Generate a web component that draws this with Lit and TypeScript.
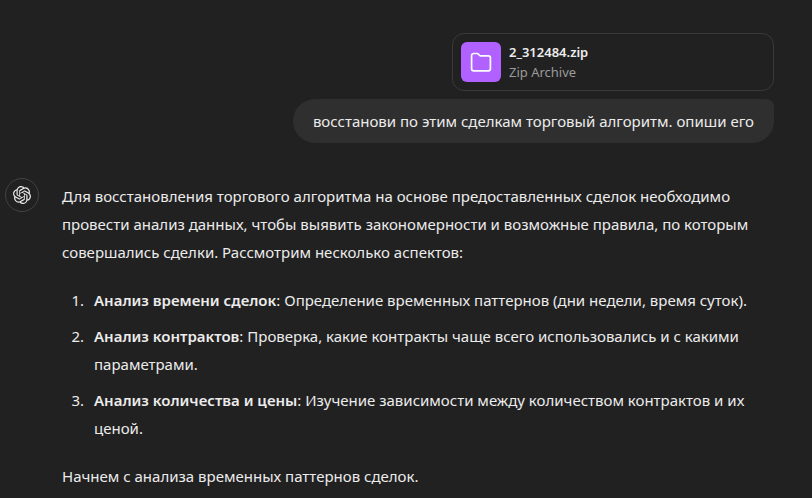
import { LitElement, html, css } from "lit";
import { customElement, property } from "lit/decorators.js";

interface Aspect {
  title: string;
  text: string;
}

const ASPECTS: Aspect[] = [
  { title: "Анализ времени сделок", text: "Определение временных паттернов (дни недели, время суток)." },
  { title: "Анализ контрактов", text: "Проверка, какие контракты чаще всего использовались и с какими параметрами." },
  { title: "Анализ количества и цены", text: "Изучение зависимости между количеством контрактов и их ценой." },
];

@customElement("file-card")
export class FileCard extends LitElement {
  @property() name = "";
  @property() kind = "";

  static styles = css`
    :host {
      display: block;
      box-sizing: border-box;
      width: 322px;
      max-width: 100%;
      padding: 8px;
      border: 1px solid #393939;
      border-radius: 12px;
    }
    .row {
      display: flex;
      align-items: center;
      gap: 8px;
    }
    .tile {
      display: flex;
      flex: none;
      align-items: center;
      justify-content: center;
      width: 40px;
      height: 40px;
      border-radius: 6px;
      background: #b061ff;
    }
    .name,
    .kind {
      font-size: 13px;
      line-height: 20px;
    }
    .name {
      font-weight: 600;
      color: #ececec;
    }
    .kind {
      color: #9b9b9b;
    }
  `;

  render() {
    return html`
      <div class="row">
        <div class="tile">
          <svg width="24" height="24" viewBox="0 0 24 24" fill="none" stroke="#fff" stroke-width="1.7" stroke-linejoin="round" aria-hidden="true">
            <path d="M2.6 5.5a2 2 0 0 1 2-2h3.5a2 2 0 0 1 1.500.7l.8 1a2 2 0 0 0 1.500.7h7.500a2 2 0 0 1 2 2v10.900a2 2 0 0 1-2 2H4.600a2 2 0 0 1-2-2z" />
          </svg>
        </div>
        <div>
          <div class="name">${this.name}</div>
          <div class="kind">${this.kind}</div>
        </div>
      </div>
    `;
  }
}

@customElement("app-root")
export class AppRoot extends LitElement {
  static styles = css`
    :host {
      display: block;
      box-sizing: border-box;
      min-height: 100vh;
      padding: 33px 38px 7px 5px;
      background: #212121;
      color: #ececec;
      font-family: "Segoe UI", "Noto Sans", sans-serif;
      font-size: 15px;
      line-height: 28px;
    }
    .user {
      display: flex;
      flex-direction: column;
      align-items: flex-end;
      gap: 8px;
    }
    .bubble {
      padding: 8px 20px;
      border-radius: 22px 8px 22px 22px;
      background: #2f2f2f;
    }
    .assistant {
      display: flex;
      align-items: flex-start;
      gap: 23px;
      margin-top: 35px;
    }
    .avatar {
      display: flex;
      flex: none;
      align-items: center;
      justify-content: center;
      box-sizing: border-box;
      width: 34px;
      height: 34px;
      border: 1px solid #424242;
      border-radius: 50%;
    }
    .answer {
      flex: 1;
      min-width: 0;
      padding-top: 4px;
    }
    p {
      margin: 0;
    }
    ol {
      display: flex;
      flex-direction: column;
      gap: 8px;
      margin: 20px 0;
      padding-left: 26px;
    }
    li {
      padding-left: 6px;
    }
    strong {
      font-weight: 600;
    }
  `;

  render() {
    return html`
      <section class="user">
        <file-card name="2_312484.zip" kind="Zip Archive"></file-card>
        <div class="bubble">восстанови по этим сделкам торговый алгоритм. опиши его</div>
      </section>
      <article class="assistant">
        <div class="avatar">
          <svg width="18" height="18" viewBox="0 0 24 24" fill="#ececec" aria-hidden="true">
            <path d="M22.2819 9.8211a5.9847 5.9847 0 0 0-.5157-4.9108 6.0462 6.0462 0 0 0-6.5098-2.9A6.0651 6.0651 0 0 0 4.9807 4.1818a5.9847 5.9847 0 0 0-3.9977 2.9 6.0462 6.0462 0 0 0 .7427 7.0966 5.98 5.98 0 0 0 .511 4.9107 6.051 6.051 0 0 0 6.5146 2.9001A5.9847 5.9847 0 0 0 13.2599 24a6.0557 6.0557 0 0 0 5.7718-4.2058 5.9894 5.9894 0 0 0 3.9977-2.9001 6.0557 6.0557 0 0 0-.7475-7.0729zm-9.022 12.6081a4.4755 4.4755 0 0 1-2.8764-1.0408l.1419-.0804 4.7783-2.7582a.7948.7948 0 0 0 .3927-.6813v-6.7369l2.02 1.1686a.071.071 0 0 1 .038.052v5.5826a4.504 4.504 0 0 1-4.4945 4.4944zm-9.6607-4.1254a4.4708 4.4708 0 0 1-.5346-3.0137l.142.0852 4.783 2.7582a.7712.7712 0 0 0 .7806 0l5.8428-3.3685v2.3324a.0804.0804 0 0 1-.0332.0615L9.74 19.9502a4.4992 4.4992 0 0 1-6.1408-1.6464zM2.3408 7.8956a4.485 4.485 0 0 1 2.3655-1.9728V11.6a.7664.7664 0 0 0 .3879.6765l5.8144 3.3543-2.0201 1.1685a.0757.0757 0 0 1-.071 0l-4.8303-2.7865A4.504 4.504 0 0 1 2.3408 7.872zm16.5963 3.8558L13.1038 8.364 15.1192 7.2a.0757.0757 0 0 1 .071 0l4.8303 2.7913a4.4944 4.4944 0 0 1-.6765 8.1042v-5.6772a.79.79 0 0 0-.407-.667zm2.0107-3.0231l-.142-.0852-4.7735-2.7818a.7759.7759 0 0 0-.7854 0L9.409 9.2297V6.8974a.0662.0662 0 0 1 .0284-.0615l4.8303-2.7866a4.4992 4.4992 0 0 1 6.6802 4.66zM8.3065 12.863l-2.02-1.1638a.0804.0804 0 0 1-.038-.0567V6.0742a4.4992 4.4992 0 0 1 7.3757-3.4537l-.142.0805L8.704 5.459a.7948.7948 0 0 0-.3927.6813zm1.0976-2.3654l2.602-1.4998 2.6069 1.4998v2.9994l-2.5974 1.4997-2.6067-1.4997Z" />
          </svg>
        </div>
        <div class="answer">
          <p>
            Для восстановления торгового алгоритма на основе предоставленных сделок необходимо
            провести анализ данных, чтобы выявить закономерности и возможные правила, по которым
            совершались сделки. Рассмотрим несколько аспектов:
          </p>
          <ol>
            ${ASPECTS.map((a) => html`<li><strong>${a.title}</strong>: ${a.text}</li>`)}
          </ol>
          <p>Начнем с анализа временных паттернов сделок.</p>
        </div>
      </article>
    `;
  }
}
